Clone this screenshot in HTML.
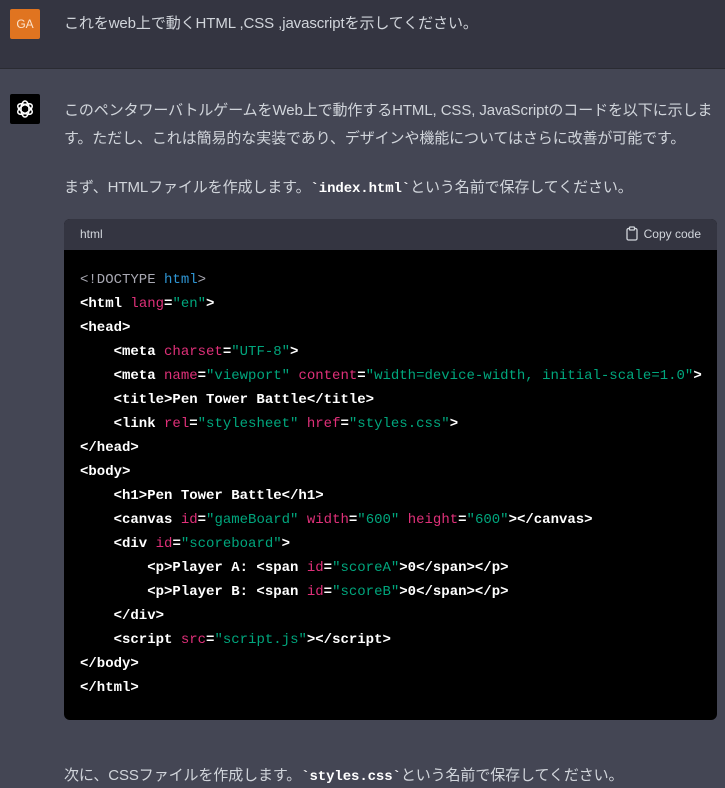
<!DOCTYPE html>
<html><head><meta charset="utf-8"><style>
*{margin:0;padding:0;box-sizing:border-box}
body{width:725px;height:788px;overflow:hidden;background:#444654;font-family:"Liberation Sans","Noto Sans CJK JP",sans-serif;color:#d1d5db;font-size:15px}
.u{height:69px;background:#343541;border-bottom:1px solid #2a2b32;position:relative}
.av{position:absolute;left:10px;width:30px;height:30px;border-radius:2px}
.ga{top:9px;background:#e07420;color:#fbe3cc;font-size:12px;text-align:center;line-height:30px}
.gpt{top:94px;background:#000}
.t{position:absolute;left:64px;white-space:nowrap;letter-spacing:-0.1px}
.code{position:absolute;left:64px;top:219px;width:653px;height:501px;border-radius:6px;overflow:hidden;background:#000}
.hd{height:31px;background:#343541;color:#d1d5db;font-size:12px;padding:0 16px;line-height:31px;display:flex;justify-content:space-between}
.hd svg{vertical-align:-3px;margin-right:6px}
pre{font-family:"Liberation Mono",monospace;font-size:14px;line-height:24px;color:#fff;font-weight:bold;padding:18px 16px}
.g{color:#a9a9b3;font-weight:normal}.b{color:#2e95d3}.r{color:#df3079;font-weight:normal}.s{color:#00a67d;font-weight:normal}
code{font-family:"Liberation Mono",monospace;font-weight:bold;color:#fff;font-size:14px}
</style></head><body>
<div class="u"><div class="av ga">GA</div><div class="t" style="top:12px">これをweb上で動くHTML ,CSS ,javascriptを示してください。</div></div>
<div class="av gpt"><svg width="30" height="30" viewBox="0 0 30 30" fill="none" stroke="#fff" stroke-width="1.5"><ellipse cx="15" cy="15" rx="8" ry="4" transform="rotate(30 15 15)"/><ellipse cx="15" cy="15" rx="8" ry="4" transform="rotate(90 15 15)"/><ellipse cx="15" cy="15" rx="8" ry="4" transform="rotate(150 15 15)"/></svg></div>
<div class="t" style="top:99px">このペンタワーバトルゲームをWeb上で動作するHTML, CSS, JavaScriptのコードを以下に示しま</div>
<div class="t" style="top:127px">す。ただし、これは簡易的な実装であり、デザインや機能についてはさらに改善が可能です。</div>
<div class="t" style="top:176px">まず、HTMLファイルを作成します。<code>`index.html`</code>という名前で保存してください。</div>
<div class="code"><div class="hd"><span>html</span><span><svg width="12" height="15" viewBox="0 0 12 15" fill="none" stroke="#d1d5db" stroke-width="1.3"><rect x="1" y="2.5" width="10" height="11.5" rx="1.5"/><rect x="3.5" y="1" width="5" height="3" rx="0.8" fill="#343541"/></svg>Copy code</span></div>
<pre><span class="g">&lt;!DOCTYPE <span class="b">html</span>&gt;</span>
&lt;html <span class="r">lang</span>=<span class="s">"en"</span>&gt;
&lt;head&gt;
    &lt;meta <span class="r">charset</span>=<span class="s">"UTF-8"</span>&gt;
    &lt;meta <span class="r">name</span>=<span class="s">"viewport"</span> <span class="r">content</span>=<span class="s">"width=device-width, initial-scale=1.0"</span>&gt;
    &lt;title&gt;Pen Tower Battle&lt;/title&gt;
    &lt;link <span class="r">rel</span>=<span class="s">"stylesheet"</span> <span class="r">href</span>=<span class="s">"styles.css"</span>&gt;
&lt;/head&gt;
&lt;body&gt;
    &lt;h1&gt;Pen Tower Battle&lt;/h1&gt;
    &lt;canvas <span class="r">id</span>=<span class="s">"gameBoard"</span> <span class="r">width</span>=<span class="s">"600"</span> <span class="r">height</span>=<span class="s">"600"</span>&gt;&lt;/canvas&gt;
    &lt;div <span class="r">id</span>=<span class="s">"scoreboard"</span>&gt;
        &lt;p&gt;Player A: &lt;span <span class="r">id</span>=<span class="s">"scoreA"</span>&gt;0&lt;/span&gt;&lt;/p&gt;
        &lt;p&gt;Player B: &lt;span <span class="r">id</span>=<span class="s">"scoreB"</span>&gt;0&lt;/span&gt;&lt;/p&gt;
    &lt;/div&gt;
    &lt;script <span class="r">src</span>=<span class="s">"script.js"</span>&gt;&lt;/script&gt;
&lt;/body&gt;
&lt;/html&gt;</pre></div>
<div class="t" style="top:764px">次に、CSSファイルを作成します。<code>`styles.css`</code>という名前で保存してください。</div>
</body></html>
